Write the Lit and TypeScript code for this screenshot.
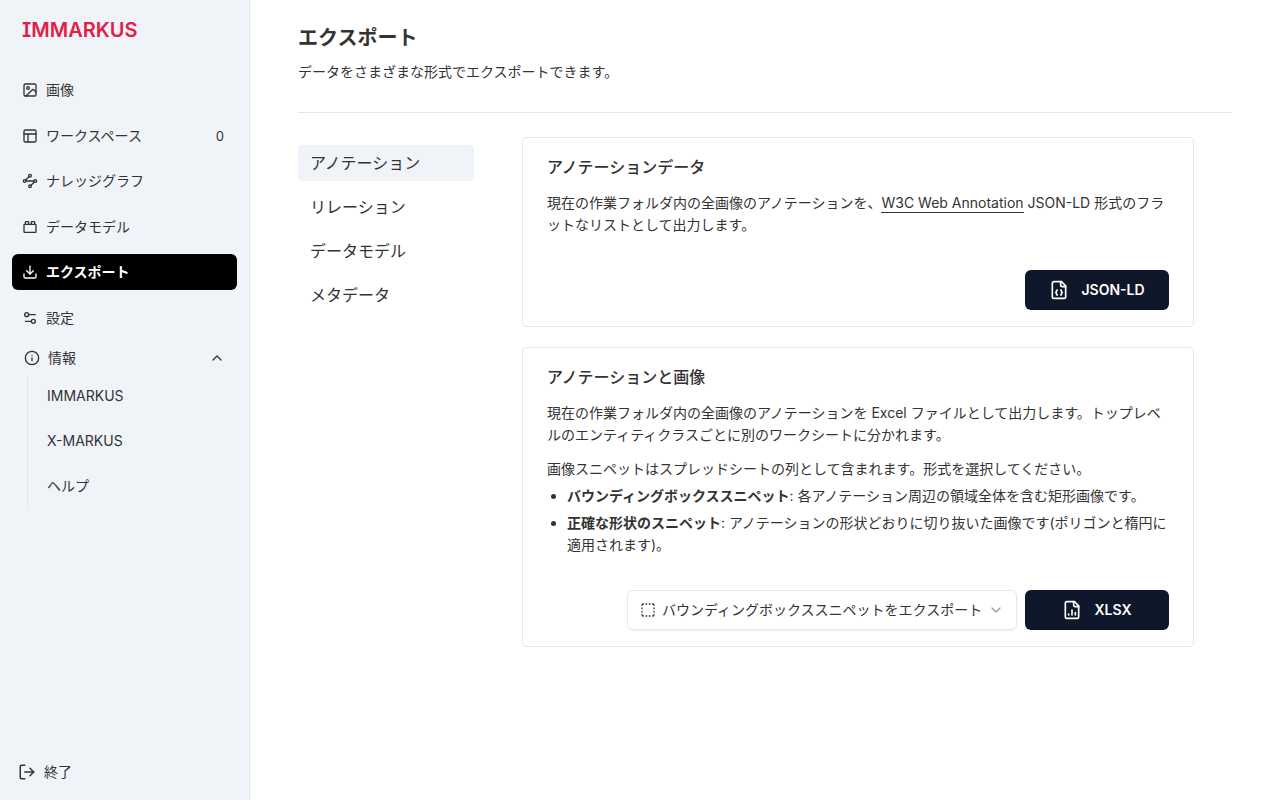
import { LitElement, html, css, svg, nothing } from "lit";
import { customElement, state } from "lit/decorators.js";

const ICONS = {
  image: svg`<rect width="18" height="18" x="3" y="3" rx="2"/><circle cx="9" cy="9" r="2"/><path d="m21 15-3.086-3.086a2 2 0 0 0-2.828 0L6 21"/>`,
  panels: svg`<rect width="18" height="18" x="3" y="3" rx="2"/><path d="M3 9h18"/><path d="M9 21V9"/>`,
  graph: svg`<circle cx="12" cy="4" r="2"/><path d="m10.4 5.6-4.8 4.8"/><circle cx="4" cy="12" r="2"/><path d="M6 12h12"/><circle cx="20" cy="12" r="2"/><path d="m13.6 18.4 4.8-4.8"/><circle cx="12" cy="20" r="2"/>`,
  brick: svg`<rect width="18" height="12" x="3" y="8" rx="1"/><path d="M10 8V5c0-.6-.4-1-1-1H6a1 1 0 0 0-1 1v3"/><path d="M19 8V5c0-.6-.4-1-1-1h-3a1 1 0 0 0-1 1v3"/>`,
  download: svg`<path d="M21 15v4a2 2 0 0 1-2 2H5a2 2 0 0 1-2-2v-4"/><path d="m7 10 5 5 5-5"/><path d="M12 15V3"/>`,
  settings: svg`<path d="M20 7h-9"/><path d="M14 17H5"/><circle cx="17" cy="17" r="3"/><circle cx="7" cy="7" r="3"/>`,
  info: svg`<circle cx="12" cy="12" r="10"/><path d="M12 16v-4"/><path d="M12 8h.01"/>`,
  up: svg`<path d="m18 15-6-6-6 6"/>`,
  down: svg`<path d="m6 9 6 6 6-6"/>`,
  logout: svg`<path d="M9 21H5a2 2 0 0 1-2-2V5a2 2 0 0 1 2-2h4"/><path d="m16 17 5-5-5-5"/><path d="M21 12H9"/>`,
  json: svg`<path d="M15 2H6a2 2 0 0 0-2 2v16a2 2 0 0 0 2 2h12a2 2 0 0 0 2-2V7Z"/><path d="M14 2v4a2 2 0 0 0 2 2h4"/><path d="M10 12a1 1 0 0 0-1 1v1a1 1 0 0 1-1 1 1 1 0 0 1 1 1v1a1 1 0 0 0 1 1"/><path d="M14 18a1 1 0 0 0 1-1v-1a1 1 0 0 1 1-1 1 1 0 0 1-1-1v-1a1 1 0 0 0-1-1"/>`,
  chart: svg`<path d="M15 2H6a2 2 0 0 0-2 2v16a2 2 0 0 0 2 2h12a2 2 0 0 0 2-2V7Z"/><path d="M14 2v4a2 2 0 0 0 2 2h4"/><path d="M8 18v-1"/><path d="M12 18v-6"/><path d="M16 18v-3"/>`,
  dashed: svg`<path d="M5 3a2 2 0 0 0-2 2"/><path d="M19 3a2 2 0 0 1 2 2"/><path d="M21 19a2 2 0 0 1-2 2"/><path d="M5 21a2 2 0 0 1-2-2"/><path d="M9 3h1"/><path d="M9 21h1"/><path d="M14 3h1"/><path d="M14 21h1"/><path d="M3 9v1"/><path d="M21 9v1"/><path d="M3 14v1"/><path d="M21 14v1"/>`,
};

type IconName = keyof typeof ICONS;

const icon = (name: IconName, size = 16, stroke = 2) => html`<svg
  class="icon"
  width=${size}
  height=${size}
  viewBox="0 0 24 24"
  fill="none"
  stroke="currentColor"
  stroke-width=${stroke}
  stroke-linecap="round"
  stroke-linejoin="round"
  aria-hidden="true"
>${ICONS[name]}</svg>`;

const NAV: { label: string; icon: IconName; count?: number; active?: boolean }[] = [
  { label: "画像", icon: "image" },
  { label: "ワークスペース", icon: "panels", count: 0 },
  { label: "ナレッジグラフ", icon: "graph" },
  { label: "データモデル", icon: "brick" },
  { label: "エクスポート", icon: "download", active: true },
  { label: "設定", icon: "settings" },
];

const TABS = ["アノテーション", "リレーション", "データモデル", "メタデータ"];

@customElement("app-root")
export class AppRoot extends LitElement {
  @state() private tab = 0;
  @state() private open = true;

  static styles = css`
    :host {
      display: flex;
      min-height: 100vh;
      font-family: Inter, "Noto Sans CJK JP", sans-serif;
      font-size: 14px;
      line-height: 20px;
      color: #333;
      background: #fff;
    }
    *, *::before, *::after { box-sizing: border-box; }
    h1, h2, p, ul { margin: 0; padding: 0; }
    a { color: inherit; text-decoration: none; }
    button, select { font: inherit; color: inherit; border: 0; background: none; margin: 0; padding: 0; cursor: pointer; }
    .icon { flex: none; display: block; }

    .sidebar {
      flex: none;
      width: 250px;
      display: flex;
      flex-direction: column;
      padding: 16px 12px;
      background: #f0f4f9;
      border-right: 1px solid #e2e8f0;
    }
    .brand {
      padding: 0 10px;
      font-size: 20px;
      line-height: 28px;
      font-weight: 600;
      font-feature-settings: "cv08";
      color: #e11d48;
    }
    .nav {
      list-style: none;
      display: flex;
      flex-direction: column;
      justify-content: space-between;
      height: 264px;
      margin-top: 28px;
    }
    .item {
      display: flex;
      align-items: center;
      gap: 8px;
      height: 36px;
      padding: 0 13px 0 10px;
      border-radius: 6px;
    }
    .item.active { background: #000; color: #fff; font-weight: 600; }
    .count { margin-left: auto; font-size: 13px; }
    .toggle {
      display: flex;
      align-items: center;
      gap: 8px;
      height: 36px;
      padding: 0 12px;
      margin-top: 4px;
      text-align: left;
    }
    .toggle .icon:last-child { margin-left: auto; }
    .sub {
      list-style: none;
      display: flex;
      flex-direction: column;
      gap: 9px;
      margin-left: 15px;
      padding: 2px 0 3px 19px;
      border-left: 1px solid #e2e8f0;
    }
    .sub a { display: flex; align-items: center; height: 36px; }
    .quit {
      display: flex;
      align-items: center;
      gap: 8px;
      height: 24px;
      margin-top: auto;
      padding: 0 6px;
    }

    .main { flex: 1; min-width: 0; padding: 24px 48px; }
    .header { padding-bottom: 30px; border-bottom: 1px solid #e2e8f0; }
    h1 { font-size: 20px; line-height: 28px; font-weight: 600; }
    .header p { margin-top: 10px; }
    .body { display: flex; align-items: flex-start; gap: 48px; padding-top: 24px; }
    .tabs { flex: none; width: 176px; display: flex; flex-direction: column; gap: 8px; padding-top: 8px; }
    .tab {
      height: 36px;
      padding: 0 12px;
      border-radius: 4px;
      font-size: 16px;
      text-align: left;
    }
    .tab.active { background: #f0f4f9; }
    .cards { flex: 1; max-width: 672px; display: flex; flex-direction: column; gap: 20px; }
    .card { border: 1px solid #e2e8f0; border-radius: 4px; padding: 16px 24px; }
    h2 { font-size: 16px; line-height: 26px; font-weight: 500; }
    .card p { margin-top: 12px; line-height: 22px; }
    .card p a { padding-bottom: 1px; border-bottom: 1px solid #333; }
    .card ul { padding-left: 20px; line-height: 22px; }
    .card li { margin-top: 5px; }
    .actions { display: flex; justify-content: flex-end; gap: 8px; margin-top: 34px; }
    .primary {
      display: flex;
      align-items: center;
      justify-content: center;
      gap: 12px;
      width: 144px;
      height: 40px;
      border-radius: 6px;
      background: #0f172a;
      color: #fff;
      font-weight: 600;
    }
    .select {
      display: flex;
      align-items: center;
      gap: 4px;
      height: 40px;
      padding: 0 12px;
      border: 1px solid #e2e8f0;
      border-radius: 6px;
      box-shadow: 0 1px 2px rgb(0 0 0 / 5%);
    }
    .select select { appearance: none; height: 38px; padding-left: 2px; }
    .select .icon:last-child { color: #999; }
  `;

  render() {
    return html`
      <aside class="sidebar">
        <div class="brand">IMMARKUS</div>
        <ul class="nav">
          ${NAV.map(
            (n) => html`<li>
              <a class="item ${n.active ? "active" : ""}" href="#">
                ${icon(n.icon)}<span>${n.label}</span>
                ${n.count === undefined ? nothing : html`<span class="count">${n.count}</span>`}
              </a>
            </li>`
          )}
        </ul>
        <button class="toggle" aria-expanded=${this.open} @click=${() => (this.open = !this.open)}>
          ${icon("info")}<span>情報</span>${icon(this.open ? "up" : "down")}
        </button>
        ${this.open
          ? html`<ul class="sub">
              <li><a href="#">IMMARKUS</a></li>
              <li><a href="#">X-MARKUS</a></li>
              <li><a href="#">ヘルプ</a></li>
            </ul>`
          : nothing}
        <button class="quit">${icon("logout", 18)}<span>終了</span></button>
      </aside>
      <main class="main">
        <header class="header">
          <h1>エクスポート</h1>
          <p>データをさまざまな形式でエクスポートできます。</p>
        </header>
        <div class="body">
          <nav class="tabs">
            ${TABS.map(
              (t, i) => html`<button class="tab ${i === this.tab ? "active" : ""}" @click=${() => (this.tab = i)}>${t}</button>`
            )}
          </nav>
          <div class="cards">
            <section class="card">
              <h2>アノテーションデータ</h2>
              <p>現在の作業フォルダ内の全画像のアノテーションを、<a href="#">W3C Web Annotation</a> JSON-LD 形式のフラットなリストとして出力します。</p>
              <div class="actions">
                <button class="primary">${icon("json", 20)}<span>JSON-LD</span></button>
              </div>
            </section>
            <section class="card">
              <h2>アノテーションと画像</h2>
              <p>現在の作業フォルダ内の全画像のアノテーションを Excel ファイルとして出力します。トップレベルのエンティティクラスごとに別のワークシートに分かれます。</p>
              <p>画像スニペットはスプレッドシートの列として含まれます。形式を選択してください。</p>
              <ul>
                <li><strong>バウンディングボックススニペット</strong>: 各アノテーション周辺の領域全体を含む矩形画像です。</li>
                <li><strong>正確な形状のスニペット</strong>: アノテーションの形状どおりに切り抜いた画像です(ポリゴンと楕円に適用されます)。</li>
              </ul>
              <div class="actions">
                <div class="select">
                  ${icon("dashed")}
                  <select aria-label="スニペットの形式">
                    <option>バウンディングボックススニペットをエクスポート</option>
                  </select>
                  ${icon("down")}
                </div>
                <button class="primary">${icon("chart", 20)}<span>XLSX</span></button>
              </div>
            </section>
          </div>
        </div>
      </main>
    `;
  }
}
